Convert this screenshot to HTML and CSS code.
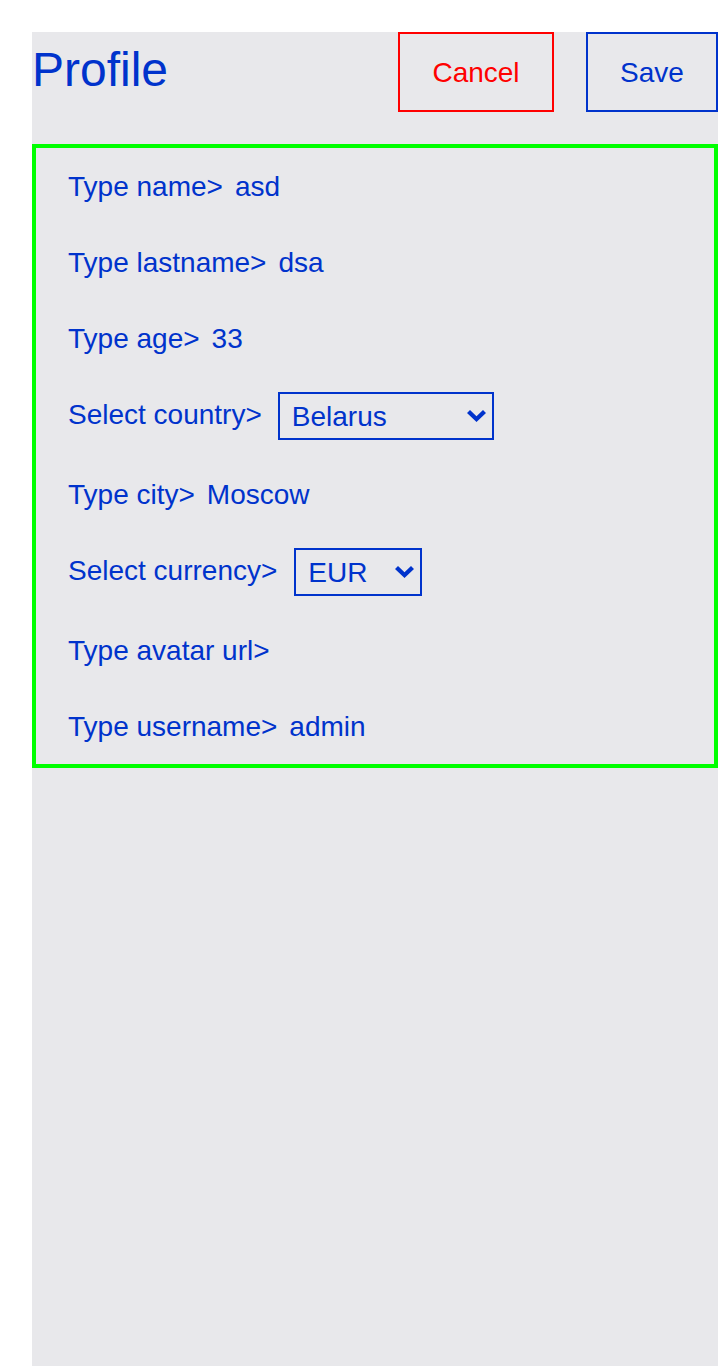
FILE: index.html
```html
<!DOCTYPE html>
<html lang="en">
<head>
<meta charset="utf-8">
<title>Profile</title>
<link rel="stylesheet" href="styles.css">
</head>
<body>
<div class="page">
  <main class="profile">
    <header class="profile-header">
      <h1 class="profile-title">Profile</h1>
      <div class="actions">
        <button class="btn btn-cancel" type="button">Cancel</button>
        <button class="btn btn-save" type="button">Save</button>
      </div>
    </header>
    <section class="card">
      <div class="row row-text"><span class="label">Type name&gt;</span><span class="value">asd</span></div>
      <div class="row row-text"><span class="label">Type lastname&gt;</span><span class="value">dsa</span></div>
      <div class="row row-text"><span class="label">Type age&gt;</span><span class="value">33</span></div>
      <div class="row row-select">
        <span class="label">Select country&gt;</span>
        <span class="select-wrap">
          <select class="select select-country">
            <option>Belarus</option>
            <option>Russia</option>
            <option>Ukraine</option>
            <option>Kazakhstan</option>
            <option>Armenia</option>
          </select>
          <svg class="chevron" width="19" height="12" viewBox="0 0 19 12" aria-hidden="true"><path d="M0 3 L3 0 L9.5 6.3 L16 0 L19 3 L9.5 12 Z"/></svg>
        </span>
      </div>
      <div class="row row-text"><span class="label">Type city&gt;</span><span class="value">Moscow</span></div>
      <div class="row row-select">
        <span class="label">Select currency&gt;</span>
        <span class="select-wrap">
          <select class="select select-currency">
            <option>EUR</option>
            <option>USD</option>
            <option>RUB</option>
          </select>
          <svg class="chevron" width="19" height="12" viewBox="0 0 19 12" aria-hidden="true"><path d="M0 3 L3 0 L9.5 6.3 L16 0 L19 3 L9.5 12 Z"/></svg>
        </span>
      </div>
      <div class="row row-text"><span class="label">Type avatar url&gt;</span></div>
      <div class="row row-text"><span class="label">Type username&gt;</span><span class="value">admin</span></div>
    </section>
  </main>
</div>
</body>
</html>
```

FILE: styles.css
```css
html, body {
  margin: 0;
  padding: 0;
  background: #ffffff;
}

body {
  font-family: "Liberation Sans", Arial, sans-serif;
  color: #0033cc;
}

.page {
  padding: 32px 0 0 32px;
}

.profile {
  background: #e8e8eb;
  min-height: calc(100vh - 32px);
  display: flex;
  flex-direction: column;
  gap: 32px;
}

.profile-header {
  display: flex;
  justify-content: space-between;
  align-items: flex-start;
}

.profile-title {
  margin: 10px 0 0 0;
  font-size: 48px;
  font-weight: normal;
  line-height: normal;
  color: #0033cc;
}

.actions {
  display: flex;
  gap: 32px;
}

.btn {
  height: 80px;
  background: transparent;
  font-family: "Liberation Sans", Arial, sans-serif;
  font-size: 28px;
  border: 2px solid;
  margin: 0;
  padding: 2px 0 0 0;
  cursor: pointer;
}

.btn-cancel {
  color: #ff0000;
  border-color: #ff0000;
  width: 156px;
}

.btn-save {
  color: #0033cc;
  border-color: #0033cc;
  width: 132px;
}

.card {
  border: 4px solid #00ff00;
  padding: 16px 32px;
  display: flex;
  flex-direction: column;
  gap: 32px;
}

.row {
  display: flex;
  align-items: center;
  min-height: 44px;
  font-size: 28px;
  line-height: 32px;
  box-sizing: border-box;
}

.row-text {
  padding-top: 2px;
}

.row-select .label {
  margin-bottom: 3px;
}

.value {
  margin-left: 12px;
}

.select-wrap {
  position: relative;
  display: inline-flex;
  margin-left: 16px;
}

.select {
  appearance: none;
  -webkit-appearance: none;
  background: transparent;
  border: 2px solid #0033cc;
  border-radius: 0;
  color: #0033cc;
  font-family: "Liberation Sans", Arial, sans-serif;
  font-size: 28px;
  line-height: 32px;
  height: 48px;
  padding: 7px 40px 5px 12px;
  margin: 0;
  box-sizing: border-box;
}

.select-country {
  width: 216px;
}

.select-currency {
  width: 128px;
  margin-left: 1px;
}

.chevron {
  position: absolute;
  right: 8px;
  top: 18px;
  fill: #0033cc;
  pointer-events: none;
}
```
